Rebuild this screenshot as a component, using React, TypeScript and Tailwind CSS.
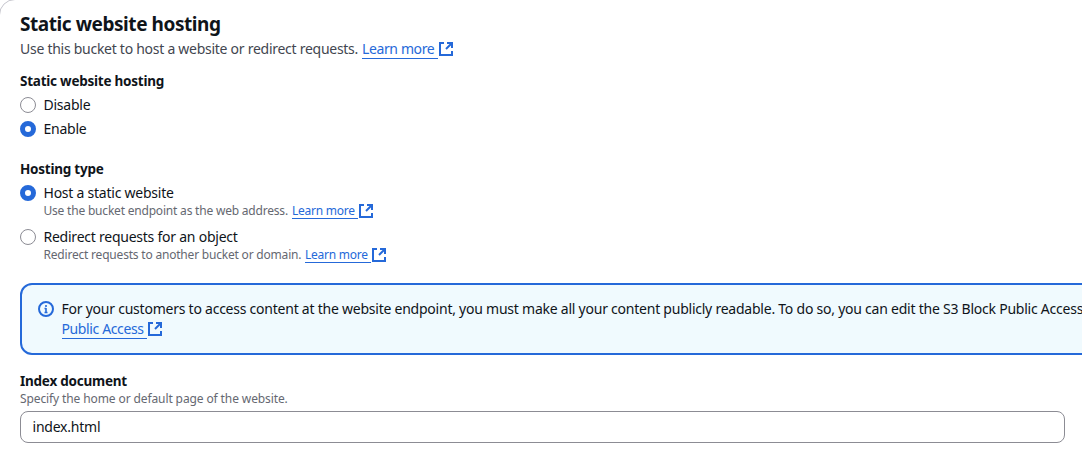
import type { ReactNode } from "react";

function ExternalIcon() {
  return (
    <svg viewBox="0 0 16 16" className="size-4 shrink-0" fill="none" stroke="currentColor" strokeWidth="2" aria-hidden="true">
      <path d="M9 2h5v5" />
      <path d="m8 8 6-6" />
      <path d="M14 10v4H2V2h4" />
    </svg>
  );
}

function InfoIcon() {
  return (
    <svg viewBox="0 0 16 16" className="mt-[2px] size-4 shrink-0 text-[#2569d9]" fill="none" stroke="currentColor" strokeWidth="2" aria-hidden="true">
      <circle cx="8" cy="8" r="7" />
      <path d="M8 11V7M6.5 7.5H8M6.5 11.5h3M8 6V4" strokeWidth="1.6" />
    </svg>
  );
}

function ExternalLink({ children, small = false }: { children: ReactNode; small?: boolean }) {
  return (
    <a href="#" className="flex text-[#2569d9]">
      <span className={small ? "h-4 border-b border-[#2569d9] pr-[3px] tracking-[-0.24px]" : "h-5 border-b border-[#2569d9] pr-[3.5px] tracking-[-0.38px]"}>
        {children}
      </span>
      <span className={small ? "flex h-4 items-center" : "flex h-5 items-center"}>
        <ExternalIcon />
      </span>
    </a>
  );
}

function Radio({ label, checked = false, children }: { label: string; checked?: boolean; children?: ReactNode }) {
  return (
    <label className="flex gap-[7.5px]">
      <span
        className={
          checked
            ? "mt-[2px] size-4 shrink-0 rounded-full border-5 border-[#2569d9] bg-white"
            : "mt-[2px] size-4 shrink-0 rounded-full border border-[#8c8c94] bg-white"
        }
      />
      <span className="flex flex-col">
        <span className="h-5 tracking-[-0.24px]">{label}</span>
        {children && <span className="flex h-4 text-xs/4 tracking-[-0.2px] text-[#656871]">{children}</span>}
      </span>
    </label>
  );
}

function FieldLabel({ children }: { children: ReactNode }) {
  return <h3 className="h-5 text-[13.5px]/5 font-bold tracking-[-0.24px]">{children}</h3>;
}

export default function App() {
  return (
    <main className="h-[453px] overflow-hidden bg-white font-['Noto_Sans',sans-serif] text-sm/5 whitespace-nowrap text-[#0f141a]">
      <section className="-mt-px -ml-px h-[520px] w-[1180px] rounded-2xl border border-[#c6c6cd] pt-3 pl-5">
        <h2 className="h-6 text-[19px]/6 font-bold tracking-[-0.44px]">Static website hosting</h2>
        <p className="mt-[3px] flex text-[#424650]">
          <span className="w-[342px] tracking-[-0.27px]">Use this bucket to host a website or redirect requests.</span>
          <ExternalLink>Learn more</ExternalLink>
        </p>

        <div className="mt-3">
          <FieldLabel>Static website hosting</FieldLabel>
          <div className="mt-1 flex flex-col gap-1">
            <Radio label="Disable" />
            <Radio label="Enable" checked />
          </div>
        </div>

        <div className="mt-5">
          <FieldLabel>Hosting type</FieldLabel>
          <div className="mt-1 flex flex-col gap-2">
            <Radio label="Host a static website" checked>
              <span className="w-[248.5px]">Use the bucket endpoint as the web address.</span>
              <ExternalLink small>Learn more</ExternalLink>
            </Radio>
            <Radio label="Redirect requests for an object">
              <span className="w-[261.5px]">Redirect requests to another bucket or domain.</span>
              <ExternalLink small>Learn more</ExternalLink>
            </Radio>
          </div>
        </div>

        <div className="mt-5 flex h-[72px] gap-[7.5px] rounded-xl border-2 border-[#2569d9] bg-[#f0fafe] px-4 pt-[14px]">
          <InfoIcon />
          <div>
            <p className="tracking-[-0.236px]">
              For your customers to access content at the website endpoint, you must make all your content publicly readable. To do so, you can edit the S3 Block Public Access
            </p>
            <ExternalLink>Public Access</ExternalLink>
          </div>
        </div>

        <div className="mt-4">
          <FieldLabel>Index document</FieldLabel>
          <p className="h-4 text-xs/4 tracking-[-0.11px] text-[#656871]">Specify the home or default page of the website.</p>
          <input
            type="text"
            defaultValue="index.html"
            className="mt-1 block h-8 w-[1045px] rounded-lg border border-[#8c8c94] bg-white px-[11.5px] pb-[2px] text-sm/5 tracking-[-0.22px] outline-none"
          />
        </div>
      </section>
    </main>
  );
}
